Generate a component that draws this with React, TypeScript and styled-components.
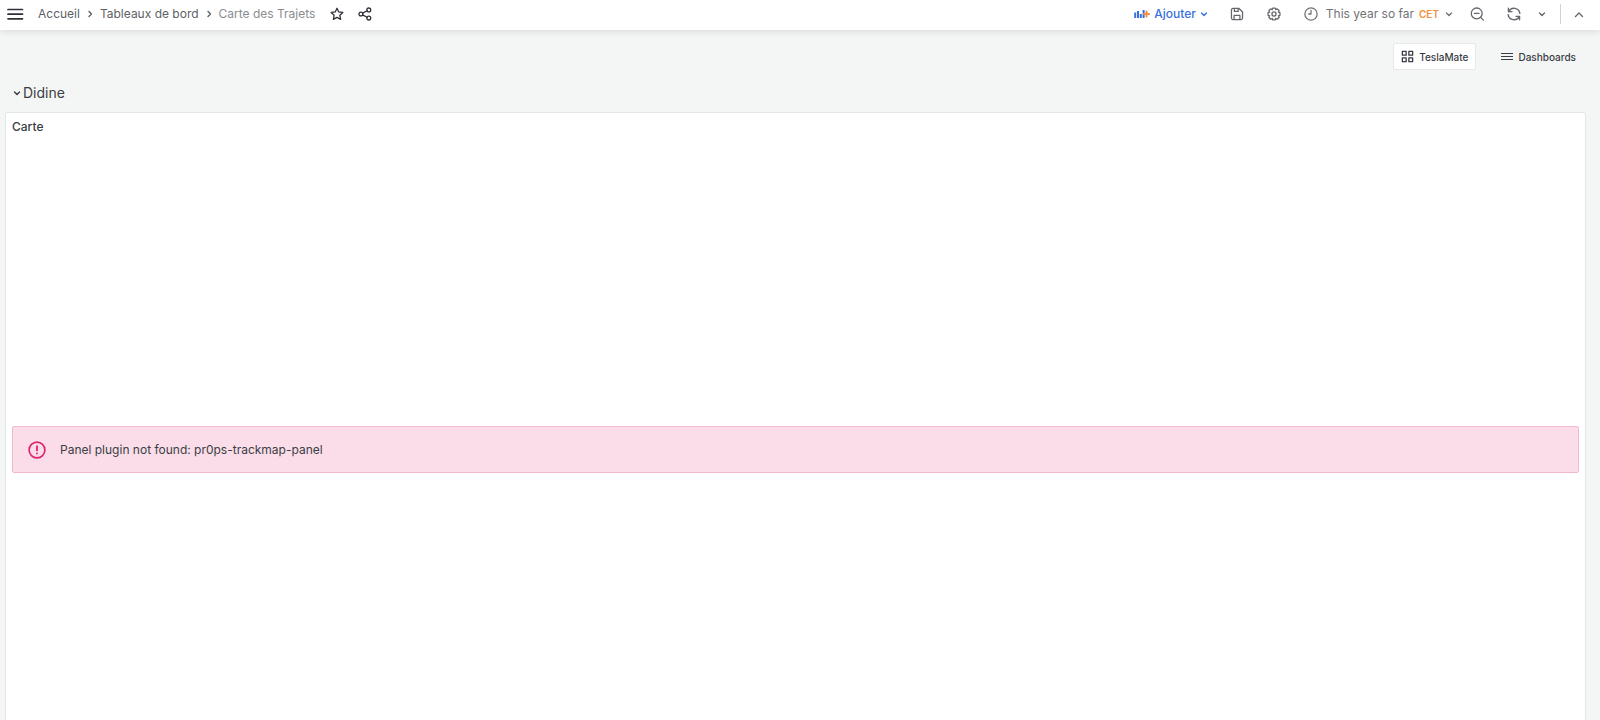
import React from "react";
import styled, { createGlobalStyle } from "styled-components";

const GlobalStyle = createGlobalStyle`
  *, *::before, *::after { box-sizing: border-box; }
  body {
    margin: 0;
    background: #f4f5f5;
    color: #3b3d44;
    font-family: Inter, "Liberation Sans", sans-serif;
    font-size: 12px;
    line-height: 20px;
  }
  button { font: inherit; color: inherit; }
`;

const Page = styled.div`
  display: flex;
  flex-direction: column;
  height: 100vh;
`;

const TopBar = styled.header`
  display: flex;
  align-items: center;
  justify-content: space-between;
  flex: none;
  height: 30px;
  padding: 0 16px 3px 7px;
  background: #fff;
  box-shadow: 0 1px 8px rgba(24, 26, 27, 0.13);
  z-index: 1;
`;

const BarGroup = styled.div`
  display: flex;
  align-items: center;
`;

const IconButton = styled.button<{ $gap?: number; $tone?: string }>`
  display: flex;
  align-items: center;
  flex: none;
  margin: 0 0 0 ${(p) => p.$gap ?? 0}px;
  padding: 0;
  border: 0;
  background: none;
  color: ${(p) => p.$tone ?? "#65676c"};
  cursor: pointer;
`;

const AddButton = styled(IconButton)`
  gap: 4px;
  color: #3871dc;
  font-weight: 500;
`;

const TimeButton = styled(IconButton)`
  color: #717378;
  white-space: nowrap;
`;

const TimeText = styled.span`
  margin-left: 8px;
`;

const Zone = styled.span`
  margin: 0 6px 0 5px;
  color: #f58e3c;
  font-size: 10px;
  font-weight: 600;
`;

const Divider = styled.span`
  width: 1px;
  height: 20px;
  margin-left: 14px;
  background: #d0d2d4;
`;

const Crumbs = styled.ol`
  display: flex;
  align-items: center;
  margin: 0 0 0 14px;
  padding: 0;
  list-style: none;
`;

const Crumb = styled.li`
  display: flex;
  align-items: center;
  color: #5d5f65;
  white-space: nowrap;

  &[aria-current] { color: #8b8d91; }
`;

const CrumbLink = styled.a`
  color: inherit;
  text-decoration: none;
`;

const CrumbArrow = styled.span`
  display: flex;
  margin: 0 6px;
`;

const Main = styled.main`
  flex: 1;
  min-height: 0;
  padding: 13px 14px 0 5px;
  overflow-y: auto;
  scrollbar-width: none;
`;

const Links = styled.nav`
  display: flex;
  justify-content: flex-end;
  gap: 17px;
`;

const linkShape = `
  display: flex;
  align-items: center;
  gap: 5px;
  height: 27px;
  padding: 0 7px;
  border: 1px solid transparent;
  border-radius: 2px;
  color: #3b3d44;
  font-size: 10px;
  font-weight: 500;
`;

const DashLink = styled.a`
  ${linkShape}
  background: #fff;
  border-color: #e6e8e9;
  text-decoration: none;
`;

const DashMenu = styled.button`
  ${linkShape}
  margin-right: 2px;
  background: none;
  cursor: pointer;
`;

const RowTitle = styled.h2`
  margin: 13px 0 9px 8px;
  font-size: 14px;
  font-weight: 400;
  line-height: 20px;
`;

const RowToggle = styled(IconButton)`
  gap: 2px;
  color: #3b3d44;
`;

const Panel = styled.section`
  display: flex;
  flex-direction: column;
  height: 672px;
  padding: 0 6px;
  background: #fff;
  border: 1px solid #e4e7e8;
  border-radius: 2px;
`;

const PanelTitle = styled.h3`
  flex: none;
  margin: 4px 0 0;
  font-size: 12px;
  font-weight: 500;
  line-height: 20px;
`;

const PanelBody = styled.div`
  display: flex;
  flex: 1;
  align-items: center;
  padding-bottom: 22px;
`;

const Alert = styled.div`
  display: flex;
  align-items: center;
  flex: 1;
  gap: 14px;
  height: 47px;
  padding: 2px 15px 0;
  background: #fadde9;
  border: 1px solid #f2b8d0;
  border-radius: 2px;
`;

const AlertIcon = styled.span`
  display: flex;
  color: #e0226e;
`;

type IconProps = { size?: number; children: React.ReactNode; weight?: number };

const Icon = ({ size = 14, weight = 2.2, children }: IconProps) => (
  <svg
    width={size}
    height={size}
    viewBox="0 0 24 24"
    fill="none"
    stroke="currentColor"
    strokeWidth={weight}
    strokeLinecap="round"
    strokeLinejoin="round"
    aria-hidden="true"
  >
    {children}
  </svg>
);

const Chevron = ({ d, width = 8 }: { d: string; width?: number }) => (
  <svg
    width={width}
    height="8"
    viewBox={`0 0 ${width} 8`}
    fill="none"
    stroke="currentColor"
    strokeWidth="1.4"
    strokeLinecap="round"
    strokeLinejoin="round"
    aria-hidden="true"
  >
    <path d={d} />
  </svg>
);

const DOWN = "M1.5 3 L4 5.5 L6.5 3";

const MenuIcon = () => (
  <svg width="17" height="12" viewBox="0 0 17 12" stroke="currentColor" strokeWidth="1.7" strokeLinecap="round" aria-hidden="true">
    <path d="M1 1.5H15.5M1 6.2H15.5M1 10.8H15.5" />
  </svg>
);

const AddPanelIcon = () => (
  <svg width="16" height="12" viewBox="0 0 16 12" fill="none" aria-hidden="true">
    <path d="M1.2 4.5V10M4 3V10M6.8 6V10M9.6 2V10" stroke="#3871dc" strokeWidth="2" />
    <path d="M12.5 3.5V8.5M10 6H15" stroke="#f58e3c" strokeWidth="2" strokeLinecap="round" />
  </svg>
);

const crumbs = ["Accueil", "Tableaux de bord"];

export default function App() {
  return (
    <>
      <GlobalStyle />
      <Page>
        <TopBar>
          <BarGroup>
            <IconButton $tone="#2f3138" aria-label="Menu">
              <MenuIcon />
            </IconButton>
            <nav aria-label="Fil d'Ariane">
              <Crumbs>
                {crumbs.map((name) => (
                  <Crumb key={name}>
                    <CrumbLink href="#">{name}</CrumbLink>
                    <CrumbArrow>
                      <Chevron d="M3 1.5 L5.5 4 L3 6.5" />
                    </CrumbArrow>
                  </Crumb>
                ))}
                <Crumb aria-current="page">Carte des Trajets</Crumb>
              </Crumbs>
            </nav>
            <IconButton $gap={15} $tone="#2f3138" aria-label="Favori">
              <Icon>
                <path d="M12 2.2l3 6.3 7 .9-5.1 4.8 1.3 7-6.2-3.4-6.2 3.4 1.3-7L2 9.4l7-.9z" />
              </Icon>
            </IconButton>
            <IconButton $gap={14} $tone="#2f3138" aria-label="Partager">
              <Icon>
                <circle cx="5" cy="12" r="3.3" />
                <circle cx="18.5" cy="5" r="3.3" />
                <circle cx="18.5" cy="19" r="3.3" />
                <path d="M8 10.5l7.5-4M8 13.5l7.5 4" />
              </Icon>
            </IconButton>
          </BarGroup>

          <BarGroup>
            <AddButton>
              <AddPanelIcon />
              Ajouter
              <Chevron d={DOWN} />
            </AddButton>
            <IconButton $gap={22} aria-label="Enregistrer">
              <Icon>
                <path d="M5 2.5h10.5l6 6V19a2.5 2.5 0 0 1-2.5 2.5H5A2.5 2.5 0 0 1 2.5 19V5A2.5 2.5 0 0 1 5 2.5z" />
                <path d="M7.5 3v4.5h6.5V3M7 21v-6.5h10V21" />
              </Icon>
            </IconButton>
            <IconButton $gap={23} aria-label="Paramètres">
              <Icon>
                <path d="M9.7 1.8h4.6l.7 2.8 2.7-1.4 3.2 3.2-1.5 2.6 2.8.7v4.6l-2.8.7 1.5 2.7-3.2 3.2-2.7-1.5-.7 2.8H9.7L9 19.4l-2.7 1.5-3.2-3.2L4.6 15l-2.8-.7V9.7L4.6 9 3.1 6.4l3.2-3.2L9 4.6z" />
                <circle cx="12" cy="12" r="3.5" />
              </Icon>
            </IconButton>
            <TimeButton $gap={23}>
              <Icon>
                <circle cx="12" cy="12" r="10.5" />
                <path d="M12 6v6H8" />
              </Icon>
              <TimeText>This year so far</TimeText>
              <Zone>CET</Zone>
              <Chevron d={DOWN} />
            </TimeButton>
            <IconButton $gap={17} aria-label="Zoom arrière">
              <Icon>
                <circle cx="11.5" cy="11" r="9.3" />
                <path d="M18.3 17.8L23 22.5M7.5 11h8" />
              </Icon>
            </IconButton>
            <IconButton $gap={23} aria-label="Actualiser">
              <Icon weight={2.4}>
                <path d="M2.5 2v6h6M3 8a10 10 0 0 1 19 3" />
                <path d="M21.5 22v-6h-6M21 16A10 10 0 0 1 2 13" />
              </Icon>
            </IconButton>
            <IconButton $gap={17} aria-label="Intervalle">
              <Chevron d={DOWN} />
            </IconButton>
            <Divider />
            <IconButton $gap={13} aria-label="Réduire">
              <Chevron d="M1.5 6.5 L5 3 L8.5 6.5" width={10} />
            </IconButton>
          </BarGroup>
        </TopBar>

        <Main>
          <Links aria-label="Liens">
            <DashLink href="#">
              <Icon size={13} weight={2.4}>
                <path d="M2.5 2.5h7v7h-7zM14.5 2.5h7v7h-7zM2.5 14.5h7v7h-7zM14.5 14.5h7v7h-7z" />
              </Icon>
              TeslaMate
            </DashLink>
            <DashMenu>
              <svg width="12" height="9" viewBox="0 0 12 9" stroke="currentColor" strokeWidth="1.2" aria-hidden="true">
                <path d="M0 1.5H12M0 4.5H12M0 7.5H12" />
              </svg>
              Dashboards
            </DashMenu>
          </Links>

          <RowTitle>
            <RowToggle aria-expanded="true">
              <Chevron d={DOWN} />
              Didine
            </RowToggle>
          </RowTitle>

          <Panel>
            <PanelTitle>Carte</PanelTitle>
            <PanelBody>
              <Alert role="alert">
                <AlertIcon>
                  <Icon size={18}>
                    <circle cx="12" cy="12" r="10.5" />
                    <path d="M12 7v5.5M12 16.5v.2" strokeWidth="2.4" />
                  </Icon>
                </AlertIcon>
                Panel plugin not found: pr0ps-trackmap-panel
              </Alert>
            </PanelBody>
          </Panel>
        </Main>
      </Page>
    </>
  );
}
